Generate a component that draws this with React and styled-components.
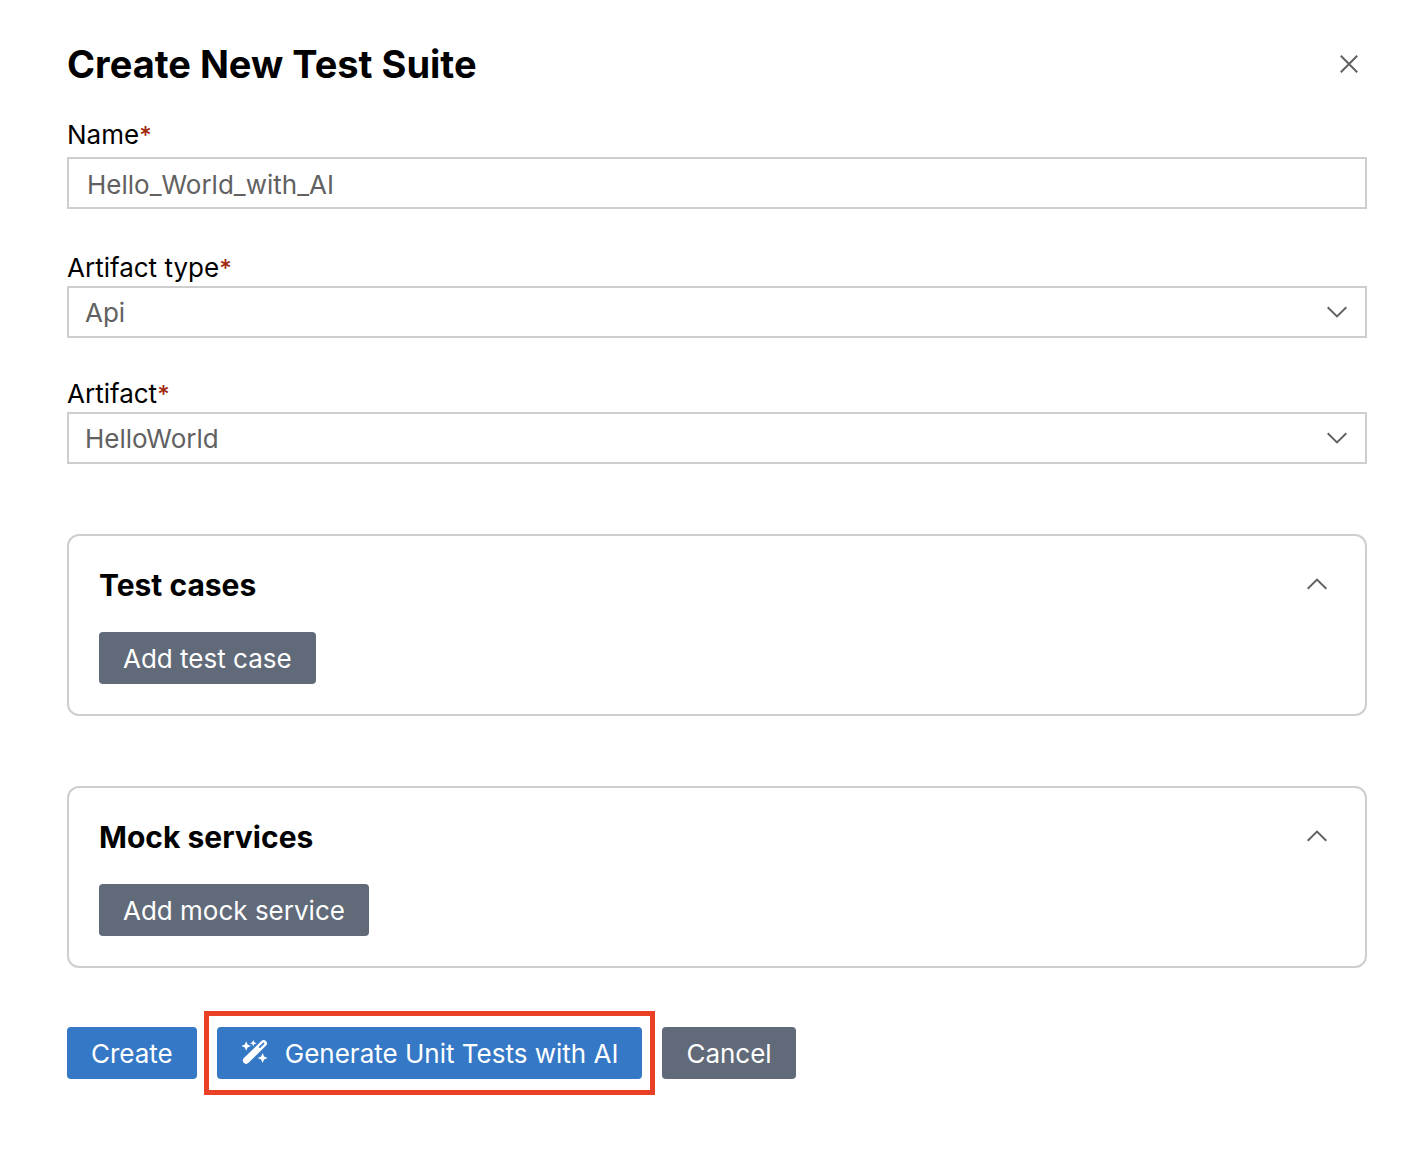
import React, { useState } from "react";
import styled, { createGlobalStyle } from "styled-components";

const GlobalStyle = createGlobalStyle`
  *, *::before, *::after {
    box-sizing: border-box;
  }
  body {
    margin: 0;
    background: #ffffff;
    color: #000000;
    font-family: Inter, "Liberation Sans", sans-serif;
    font-size: 26px;
    line-height: 32px;
  }
`;

const Page = styled.form`
  display: flex;
  flex-direction: column;
  padding: 40px 55px 74px 67px;
`;

const Header = styled.header`
  display: flex;
  align-items: center;
  justify-content: space-between;
  margin-bottom: 31px;
`;

const Title = styled.h1`
  margin: 0;
  font-size: 38px;
  line-height: 48px;
  font-weight: 700;
`;

const IconButton = styled.button`
  display: grid;
  place-items: center;
  width: 36px;
  height: 36px;
  padding: 0;
  border: 0;
  background: transparent;
  color: #616161;
  cursor: pointer;
`;

const Field = styled.div`
  display: flex;
  flex-direction: column;
  gap: ${(p) => p.$gap}px;
  margin-bottom: ${(p) => p.$after}px;
`;

const Label = styled.label`
  line-height: 32px;
`;

const Required = styled.span`
  color: #a1260d;
  font-size: 24px;
  font-weight: 500;
  line-height: 24px;
`;

const TextInput = styled.input`
  width: 100%;
  height: 52px;
  padding: 2px 18px 0;
  border: 2px solid #cecece;
  border-radius: 0;
  background: #ffffff;
  color: #616161;
  font: inherit;
  outline: none;
`;

const SelectBox = styled.div`
  display: grid;
  align-items: center;

  > * {
    grid-area: 1 / 1;
  }

  > svg {
    justify-self: end;
    margin-right: 20px;
    pointer-events: none;
  }
`;

const Select = styled.select`
  appearance: none;
  width: 100%;
  height: 52px;
  padding: 2px 56px 0 16px;
  border: 2px solid #cecece;
  border-radius: 0;
  background: #ffffff;
  color: #616161;
  font: inherit;
  outline: none;
`;

const Card = styled.section`
  display: flex;
  flex-direction: column;
  align-items: flex-start;
  gap: 28px;
  margin-bottom: ${(p) => p.$after}px;
  padding: 30px;
  border: 2px solid #cecece;
  border-radius: 12px;
`;

const CardHeader = styled.div`
  display: flex;
  align-items: flex-start;
  justify-content: space-between;
  align-self: stretch;
  height: 38px;
`;

const CardTitle = styled.h2`
  margin: 0;
  font-size: 30px;
  line-height: 38px;
  font-weight: 700;
`;

const Button = styled.button`
  display: inline-flex;
  align-items: center;
  gap: 16px;
  height: 52px;
  padding: 2px 24px 0;
  border: 0;
  border-radius: 4px;
  background: ${(p) => (p.$primary ? "#3478c6" : "#616a79")};
  color: #ffffff;
  font: inherit;
  white-space: nowrap;
  cursor: pointer;
`;

const Actions = styled.div`
  display: flex;
  align-items: center;
  gap: 7px;
`;

const Highlight = styled.div`
  display: flex;
  padding: 11px 8px;
  border: 5px solid #ea4025;
`;

function Chevron({ up }) {
  return (
    <svg width="20" height="12" viewBox="0 0 20 12" fill="none" stroke="#616161" strokeWidth="2" aria-hidden="true">
      <path d={up ? "M.7 10.8 10 1.6l9.3 9.2" : "M.7 1.2 10 10.4l9.3-9.2"} />
    </svg>
  );
}

function CloseIcon() {
  return (
    <svg width="18" height="18" viewBox="0 0 18 18" fill="none" stroke="currentColor" strokeWidth="2" aria-hidden="true">
      <path d="M.8.8l16.4 16.4M17.2.8.8 17.2" />
    </svg>
  );
}

function WandIcon() {
  return (
    <svg width="28" height="28" viewBox="0 1 28 28" fill="#ffffff" aria-hidden="true">
      <path d="M5.2 21.4 22.6 4.4" stroke="#ffffff" strokeWidth="6.6" strokeLinecap="round" />
      <path d="M18.8 8.1 22.6 4.4" stroke="#3478c6" strokeWidth="1.6" strokeLinecap="round" />
      <path d="M5.2 2.2 6.6 5.6 10 7 6.6 8.4 5.2 11.8 3.8 8.4.4 7l3.4-1.4z" />
      <path d="m12.3 .9 1 2.3 2.3 1-2.3 1-1 2.3-1-2.3-2.3-1 2.3-1z" />
      <path d="m21.6 14 1.5 3.5 3.5 1.5-3.5 1.5-1.5 3.5-1.5-3.5-3.5-1.5 3.5-1.5z" />
    </svg>
  );
}

function FieldLabel({ htmlFor, children }) {
  return (
    <Label htmlFor={htmlFor}>
      {children}
      <Required>*</Required>
    </Label>
  );
}

function SelectField({ id, label, options, after }) {
  return (
    <Field $gap={2} $after={after}>
      <FieldLabel htmlFor={id}>{label}</FieldLabel>
      <SelectBox>
        <Select id={id} defaultValue={options[0]}>
          {options.map((option) => (
            <option key={option}>{option}</option>
          ))}
        </Select>
        <Chevron />
      </SelectBox>
    </Field>
  );
}

function CollapsibleCard({ title, action, after }) {
  const [open, setOpen] = useState(true);
  return (
    <Card $after={after}>
      <CardHeader>
        <CardTitle>{title}</CardTitle>
        <IconButton type="button" aria-label={title} aria-expanded={open} onClick={() => setOpen(!open)}>
          <Chevron up={open} />
        </IconButton>
      </CardHeader>
      {open && <Button type="button">{action}</Button>}
    </Card>
  );
}

export default function App() {
  const [name, setName] = useState("Hello_World_with_AI");
  return (
    <>
      <GlobalStyle />
      <Page onSubmit={(e) => e.preventDefault()}>
        <Header>
          <Title>Create New Test Suite</Title>
          <IconButton type="button" aria-label="Close">
            <CloseIcon />
          </IconButton>
        </Header>
        <Field $gap={6} $after={43}>
          <FieldLabel htmlFor="name">Name</FieldLabel>
          <TextInput id="name" type="text" value={name} onChange={(e) => setName(e.target.value)} />
        </Field>
        <SelectField id="artifact-type" label="Artifact type" options={["Api"]} after={40} />
        <SelectField id="artifact" label="Artifact" options={["HelloWorld"]} after={70} />
        <CollapsibleCard title="Test cases" action="Add test case" after={70} />
        <CollapsibleCard title="Mock services" action="Add mock service" after={43} />
        <Actions>
          <Button type="submit" $primary>Create</Button>
          <Highlight>
            <Button type="button" $primary>
              <WandIcon />
              Generate Unit Tests with AI
            </Button>
          </Highlight>
          <Button type="button">Cancel</Button>
        </Actions>
      </Page>
    </>
  );
}
